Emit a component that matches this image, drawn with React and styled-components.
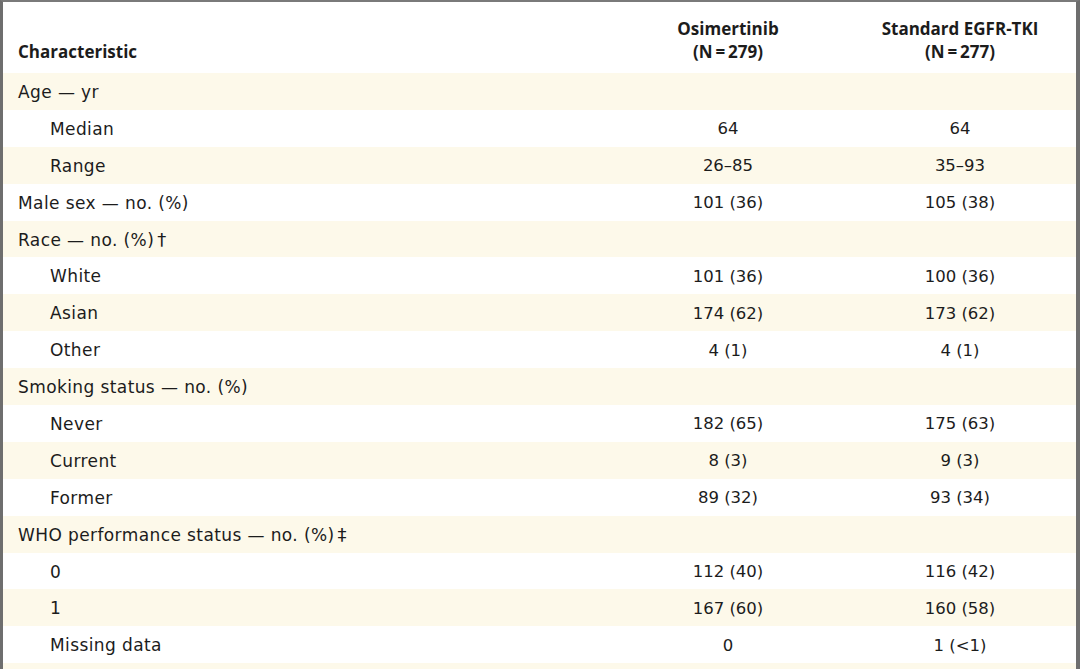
import React from "react";
import styled, { createGlobalStyle } from "styled-components";

const Global = createGlobalStyle`
  html, body { margin: 0; padding: 0; background: #ffffff; }
  body { font-family: "DejaVu Sans", "Open Sans", sans-serif; color: #1c1c1c; }
`;

const Frame = styled.div`
  width: 1080px;
  height: 669px;
  box-sizing: border-box;
  border-left: 3px solid #6e6e6e;
  border-top: 2px solid #7a7a7a;
  border-right: 4px solid #6e6e6e;
  overflow: hidden;
  background: #fdf9ea;
`;

const Grid = styled.div`
  display: grid;
  grid-template-columns: 1fr 232px 232px;
`;

const HeadRow = styled.div`
  display: contents;
`;

const HeadCell = styled.div`
  height: 71px;
  box-sizing: border-box;
  background: #ffffff;
  display: flex;
  flex-direction: column;
  justify-content: flex-end;
  align-items: ${(p) => (p.$left ? "flex-start" : "center")};
  padding: 0 0 10px ${(p) => (p.$left ? "15px" : "0")};
  font-family: "Open Sans", "DejaVu Sans", sans-serif;
  font-weight: 700;
  font-size: 17px;
  line-height: 23px;
  text-align: center;
`;

const Row = styled.div`
  display: contents;
`;

const Cell = styled.div`
  height: 36.9px;
  display: flex;
  align-items: center;
  box-sizing: border-box;
  font-size: ${(p) => (p.$label ? "17px" : "16.5px")};
  letter-spacing: ${(p) => (p.$label ? "0.4px" : "0")};
  background: ${(p) => (p.$shade ? "#fdf9ea" : "#ffffff")};
  justify-content: ${(p) => (p.$label ? "flex-start" : "center")};
  padding-left: ${(p) => (p.$label ? (p.$indent ? "47px" : "15px") : "0")};
  padding-top: 1px;
  white-space: nowrap;
`;

const Mark = styled.span`
  margin-left: 3px;
  font-size: 18px;
`;

const rows = [
  { label: "Age — yr" },
  { label: "Median", indent: true, a: "64", b: "64" },
  { label: "Range", indent: true, a: "26–85", b: "35–93" },
  { label: "Male sex — no. (%)", a: "101 (36)", b: "105 (38)" },
  { label: "Race — no. (%)", mark: "†" },
  { label: "White", indent: true, a: "101 (36)", b: "100 (36)" },
  { label: "Asian", indent: true, a: "174 (62)", b: "173 (62)" },
  { label: "Other", indent: true, a: "4 (1)", b: "4 (1)" },
  { label: "Smoking status — no. (%)" },
  { label: "Never", indent: true, a: "182 (65)", b: "175 (63)" },
  { label: "Current", indent: true, a: "8 (3)", b: "9 (3)" },
  { label: "Former", indent: true, a: "89 (32)", b: "93 (34)" },
  { label: "WHO performance status — no. (%)", mark: "‡" },
  { label: "0", indent: true, a: "112 (40)", b: "116 (42)" },
  { label: "1", indent: true, a: "167 (60)", b: "160 (58)" },
  { label: "Missing data", indent: true, a: "0", b: "1 (<1)" },
];

export default function App() {
  return (
    <>
      <Global />
      <Frame>
        <Grid>
          <HeadRow>
            <HeadCell $left>Characteristic</HeadCell>
            <HeadCell>
              <span>Osimertinib</span>
              <span>(N{"\u2009"}={"\u2009"}279)</span>
            </HeadCell>
            <HeadCell>
              <span>Standard EGFR-TKI</span>
              <span>(N{"\u2009"}={"\u2009"}277)</span>
            </HeadCell>
          </HeadRow>
          {rows.map((r, i) => {
            const shade = i % 2 === 0;
            return (
              <Row key={i}>
                <Cell $label $indent={r.indent} $shade={shade}>
                  {r.label}
                  {r.mark && <Mark>{r.mark}</Mark>}
                </Cell>
                <Cell $shade={shade}>{r.a || ""}</Cell>
                <Cell $shade={shade}>{r.b || ""}</Cell>
              </Row>
            );
          })}
        </Grid>
      </Frame>
    </>
  );
}
